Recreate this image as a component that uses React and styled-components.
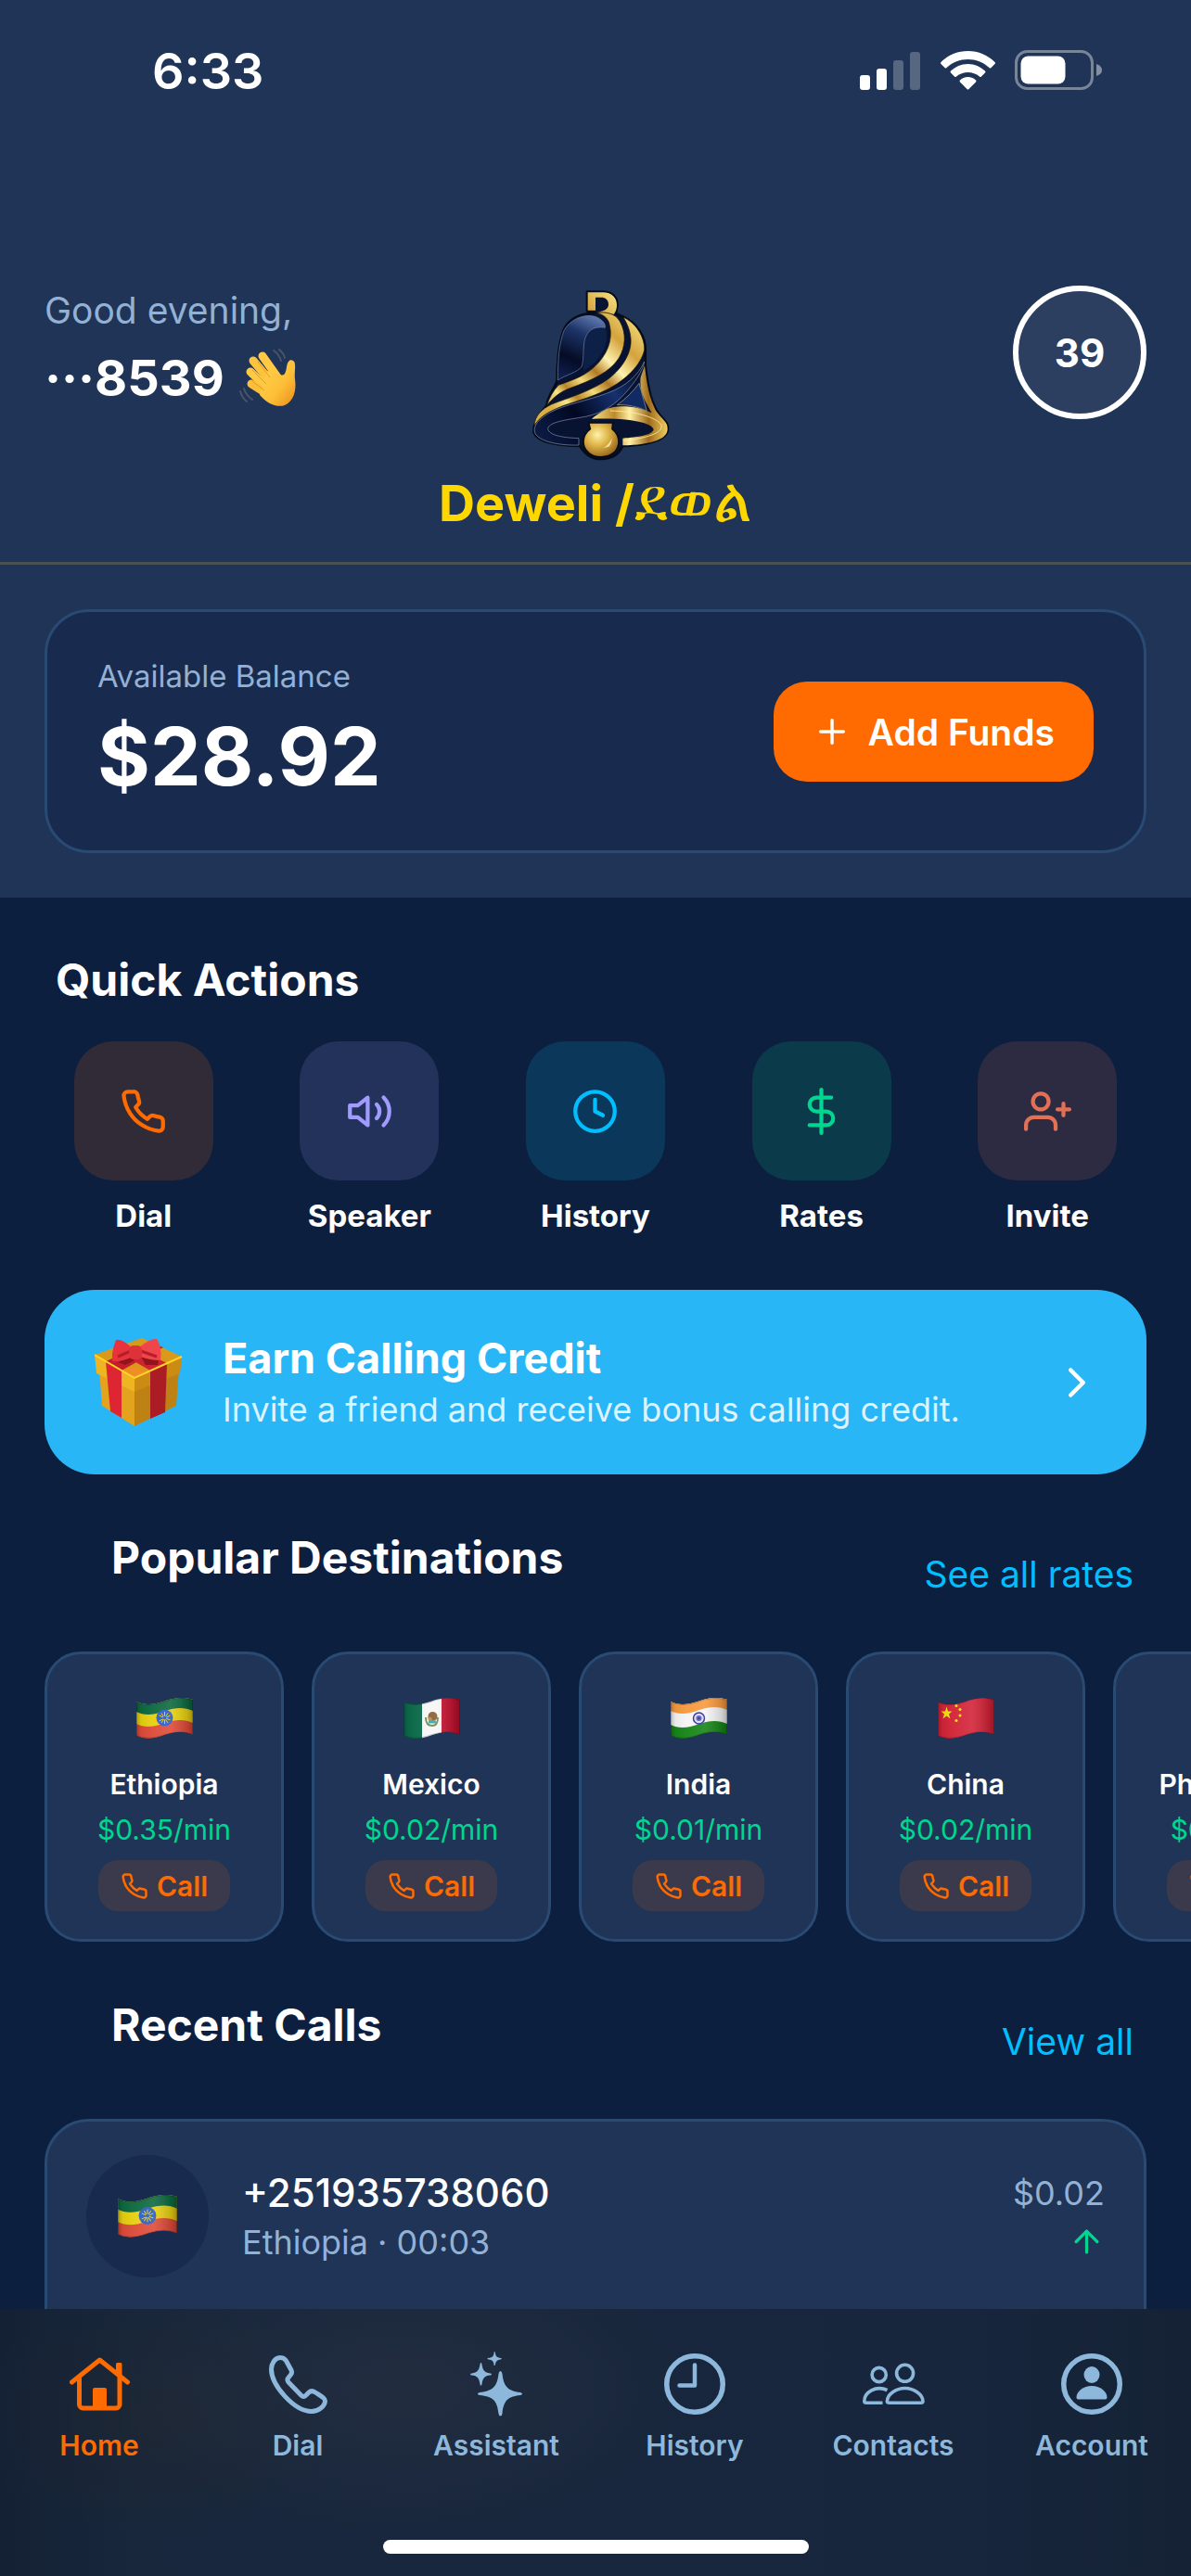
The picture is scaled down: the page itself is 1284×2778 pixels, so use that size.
import React from "react";
import styled, { createGlobalStyle } from "styled-components";
import {
  FiArrowUp,
  FiChevronRight,
  FiClock,
  FiDollarSign,
  FiPhone,
  FiPlus,
  FiUserPlus,
  FiVolume2
} from "react-icons/fi";

const colors = {
  page: "#0d1f3e",
  panel: "#1f3456",
  inset: "#182b4e",
  line: "#294a73",
  muted: "#93b1d4",
  tab: "#8db8db",
  orange: "#ff6b00",
  blue: "#00bfff",
  green: "#00d68f",
  gold: "#ffd700"
};

const GlobalStyle = createGlobalStyle`
  * {
    box-sizing: border-box;
  }

  body {
    margin: 0;
    background: ${colors.page};
    color: white;
    font-family: Inter, "Noto Sans", sans-serif;
  }

  h1, h2, p {
    margin: 0;
  }

  button {
    font-family: inherit;
    border: 0;
    padding: 0;
    color: inherit;
    cursor: pointer;
  }

  a {
    text-decoration: none;
  }

  svg {
    display: block;
    flex-shrink: 0;
  }
`;

const Screen = styled.div`
  height: 100vh;
  display: flex;
  flex-direction: column;
  overflow: hidden;
`;

const Content = styled.main`
  flex: 1;
  min-height: 0;
  overflow: hidden;
`;

const StatusBar = styled.div`
  display: flex;
  justify-content: space-between;
  align-items: center;
  padding: 44px 96px 0 164px;
  background: ${colors.panel};
`;

const Time = styled.span`
  font-size: 54px;
  line-height: 66px;
  font-weight: 600;
`;

const StatusIcons = styled.div`
  display: flex;
  align-items: center;
  gap: 21px;
  padding-bottom: 3px;
`;

const Header = styled.header`
  display: grid;
  grid-template-columns: 1fr auto 1fr;
  align-items: start;
  padding: 198px 48px 35px;
  background: ${colors.panel};
  border-bottom: 3px solid #4b5151;
`;

const Greeting = styled.div`
  padding-top: 3px;
`;

const Hello = styled.p`
  font-size: 39px;
  line-height: 48px;
  color: ${colors.muted};
`;

const UserName = styled.p`
  display: flex;
  align-items: center;
  gap: 15px;
  margin-top: 16px;
  font-size: 54px;
  line-height: 66px;
  font-weight: 700;
`;

const Brand = styled.div`
  display: flex;
  flex-direction: column;
  align-items: center;
  gap: 7px;
  padding-top: 4px;
`;

const BrandName = styled.h1`
  display: flex;
  align-items: baseline;
  height: 66px;
  font-size: 54px;
  line-height: 66px;
  font-weight: 700;
  color: ${colors.gold};
  white-space: nowrap;
`;

const Amharic = styled.span`
  font-size: 66px;
  font-weight: 400;
`;

const CounterButton = styled.button`
  justify-self: end;
  width: 144px;
  height: 144px;
  border: 6px solid white;
  border-radius: 50%;
  background: #2c3f60;
  font-size: 42px;
  font-weight: 700;
`;

const BalanceSection = styled.section`
  padding: 48px;
  background: ${colors.panel};
`;

const BalanceCard = styled.div`
  display: flex;
  align-items: center;
  justify-content: space-between;
  padding: 48px 54px 47px;
  background: ${colors.inset};
  border: 3px solid ${colors.line};
  border-radius: 48px;
`;

const BalanceLabel = styled.p`
  font-size: 33px;
  line-height: 42px;
  color: ${colors.muted};
`;

const Balance = styled.p`
  margin-top: 12px;
  font-size: 87px;
  line-height: 108px;
  font-weight: 700;
`;

const AddButton = styled.button`
  display: flex;
  align-items: center;
  gap: 18px;
  height: 108px;
  padding: 0 42px;
  border-radius: 36px;
  background: ${colors.orange};
  font-size: 39px;
  font-weight: 600;
`;

const Section = styled.section`
  padding-top: ${props => props.$top || 60}px;
`;

const Title = styled.h2`
  margin: 0 0 36px ${props => props.$left}px;
  font-size: 48px;
  line-height: 60px;
  font-weight: 700;
`;

const SectionHead = styled.div`
  display: flex;
  align-items: center;
  justify-content: space-between;
  padding-right: 62px;
  margin-bottom: 35px;
`;

const SectionLink = styled.a`
  font-size: 39px;
  line-height: 48px;
  color: ${colors.blue};
`;

const Actions = styled.div`
  display: grid;
  grid-template-columns: repeat(5, 1fr);
  padding: 0 33px;
`;

const Action = styled.button`
  display: flex;
  flex-direction: column;
  align-items: center;
  gap: 17px;
  background: none;
  font-size: 33px;
  line-height: 42px;
  font-weight: 700;
`;

const ActionTile = styled.span`
  display: flex;
  align-items: center;
  justify-content: center;
  width: 150px;
  height: 150px;
  border-radius: 42px;
  background: ${props => props.$bg};
  color: ${props => props.$color};
`;

const Promo = styled.a`
  display: flex;
  align-items: center;
  margin: 59px 48px 0;
  padding: 47px 48px 47px 54px;
  border-radius: 54px;
  background: #29b6f6;
  color: white;
`;

const PromoText = styled.div`
  flex: 1;
  margin-left: 42px;
`;

const PromoTitle = styled.p`
  font-size: 45px;
  line-height: 54px;
  font-weight: 700;
`;

const PromoNote = styled.p`
  margin-top: 6px;
  font-size: 36px;
  line-height: 45px;
  color: rgba(255, 255, 255, 0.85);
`;

const Destinations = styled.div`
  display: flex;
  gap: 30px;
  padding: 0 48px;
  overflow: hidden;
`;

const Destination = styled.div`
  display: flex;
  flex-direction: column;
  align-items: center;
  flex: 0 0 258px;
  padding: 47px 0 30px;
  background: ${colors.panel};
  border: 3px solid ${colors.line};
  border-radius: 39px;
  font-size: 30px;
  line-height: 36px;
`;

const Country = styled.p`
  margin-top: 31px;
  font-weight: 600;
`;

const Rate = styled.p`
  margin: 13px 0 15px;
  color: ${colors.green};
`;

const CallButton = styled.button`
  display: flex;
  align-items: center;
  gap: 9px;
  height: 55px;
  padding: 0 24px;
  border-radius: 21px;
  background: #3b3a4c;
  color: ${colors.orange};
  font-size: 30px;
  font-weight: 600;
`;

const Calls = styled.div`
  margin: 0 48px;
  padding-bottom: 66px;
  background: ${colors.panel};
  border: 3px solid ${colors.line};
  border-radius: 48px;
`;

const CallRow = styled.div`
  display: flex;
  align-items: center;
  padding: 36px 42px;
`;

const CallAvatar = styled.div`
  display: flex;
  align-items: center;
  justify-content: center;
  width: 132px;
  height: 132px;
  border-radius: 50%;
  background: ${colors.inset};
`;

const CallInfo = styled.div`
  flex: 1;
  margin-left: 36px;
`;

const CallNumber = styled.p`
  font-size: 42px;
  line-height: 51px;
  font-weight: 500;
`;

const CallMeta = styled.p`
  margin-top: 6px;
  font-size: 36px;
  line-height: 45px;
  color: ${colors.muted};
`;

const CallCost = styled.div`
  display: flex;
  flex-direction: column;
  align-items: flex-end;
  gap: 10px;
  font-size: 36px;
  line-height: 45px;
  color: ${colors.muted};
`;

const TabBar = styled.footer`
  padding: 48px 0 24px;
  background:
    radial-gradient(ellipse 320px 170px at 34% 30%, rgba(44, 50, 66, 0.5), transparent),
    radial-gradient(ellipse 200px 130px at 13% 40%, rgba(34, 38, 44, 0.5), transparent),
    linear-gradient(90deg, #142135, #18273c 12%, #17263d 80%, #152235);
`;

const Tabs = styled.nav`
  display: grid;
  grid-template-columns: repeat(6, 1fr);
`;

const Tab = styled.a`
  display: flex;
  flex-direction: column;
  align-items: center;
  gap: 15px;
  font-size: 30px;
  line-height: 36px;
  font-weight: 600;
  color: ${props => (props.$active ? colors.orange : colors.tab)};
`;

const TabIcon = styled.span`
  display: flex;
  align-items: center;
  height: 66px;
`;

const HomeIndicator = styled.div`
  width: 459px;
  height: 15px;
  margin: 84px auto 0;
  border-radius: 8px;
  background: white;
`;

const Signal = () => (
  <svg width="66" height="42" viewBox="0 0 66 42" fill="white">
    <rect y="26" width="11" height="16" rx="3" />
    <rect x="18" y="19" width="11" height="23" rx="3" />
    <rect x="36" y="10" width="11" height="32" rx="3" opacity=".25" />
    <rect x="54" y="1" width="11" height="41" rx="3" opacity=".25" />
  </svg>
);

const Wifi = () => (
  <svg width="59" height="42" viewBox="0 0 59 42" fill="white">
    <path d="M29.500 0C41 0 51 4.500 58.500 12Q59.500 13 58.500 14L54.500 18Q53.500 19 52.500 18C46 12 38 9 29.500 9S13 12 6.500 18Q5.500 19 4.500 18L.5 14Q-.5 13 .5 12C8 4.500 18 0 29.500 0Z" />
    <path d="M29.500 14C37 14 43 17 48 21.500Q49 22.500 48 23.500L44 27.500Q43 28.500 42 27.500C38.500 24.500 34 23 29.500 23S20.500 24.500 17 27.500Q16 28.500 15 27.500L11 23.500Q10 22.500 11 21.500C16 17 22 14 29.500 14Z" />
    <path d="M29.500 28C33 28 36 29.500 38 31.500Q39 32.500 38 33.500L30.500 41Q29.500 42 28.500 41L21 33.500Q20 32.500 21 31.500C23 29.500 26 28 29.500 28Z" />
  </svg>
);

const Battery = () => (
  <svg width="94" height="43" viewBox="0 0 94 43">
    <rect x="1.500" y="1.500" width="82" height="40" rx="12" fill="none" stroke="white" strokeWidth="3" opacity=".4" />
    <rect x="6.500" y="6.500" width="48" height="30" rx="8" fill="white" />
    <path d="M88 15Q94 17 94 21.500T88 28Z" fill="white" opacity=".45" />
  </svg>
);

const Hand = () => (
  <svg width="66" height="64" viewBox="0 0 66 64" role="img" aria-label="Waving hand">
    <defs>
      <linearGradient id="skin" x1="0" y1="0" x2="1" y2="1">
        <stop offset="0" stopColor="#ffd453" />
        <stop offset=".6" stopColor="#fdbe36" />
        <stop offset="1" stopColor="#e78b1d" />
      </linearGradient>
    </defs>
    <g stroke="#ffc943" strokeWidth="9" strokeLinecap="round">
      <path d="M26 8L43 32" />
      <path d="M16 13L37 38" stroke="#fdc23e" />
      <path d="M13 25L33 44" />
      <path d="M14 38L33 50" stroke="#fdbf3a" />
    </g>
    <path d="M31 24L45 28C50 30 51 26 52 20C53 13 56 11 59 13C63 15 60 25 61 33C63 46 59 57 50 61C41 64 31 59 23 50Z" fill="url(#skin)" />
    <path d="M21 14L34 31M15 23L30 38M15 35L28 45" stroke="#d98b22" strokeWidth="1" fill="none" opacity=".7" />
    <path d="M38 2Q44 6 46 13M44 1Q49 5 50 10M6 43Q8 50 15 55M2 46Q4 53 9 57" stroke="#4a5468" strokeWidth="2" fill="none" strokeLinecap="round" />
  </svg>
);

const Bell = () => (
  <svg width="162" height="186" viewBox="59 66 486 558" role="img" aria-label="Deweli bell">
    <defs>
      <linearGradient id="ribbon" gradientUnits="userSpaceOnUse" x1="150" y1="440" x2="440" y2="150">
        <stop offset="0" stopColor="#d8ae45" />
        <stop offset=".12" stopColor="#f6e48e" />
        <stop offset=".2" stopColor="#b98527" />
        <stop offset=".32" stopColor="#f3dc7c" />
        <stop offset=".45" stopColor="#b07a24" />
        <stop offset=".58" stopColor="#fff3b0" />
        <stop offset=".75" stopColor="#d3a33d" />
        <stop offset="1" stopColor="#f6e184" />
      </linearGradient>
      <linearGradient id="rim" x1="0" y1="0" x2="1" y2="0">
        <stop offset="0" stopColor="#f7e48c" />
        <stop offset=".3" stopColor="#bd8a2b" />
        <stop offset=".5" stopColor="#fff0a5" />
        <stop offset=".75" stopColor="#9f6a19" />
        <stop offset="1" stopColor="#f0cf62" />
      </linearGradient>
      <linearGradient id="dome" gradientUnits="userSpaceOnUse" x1="290" y1="150" x2="200" y2="350">
        <stop offset="0" stopColor="#5f79ae" />
        <stop offset=".3" stopColor="#1d3468" />
        <stop offset=".7" stopColor="#040c25" />
        <stop offset="1" stopColor="#0d1f4d" />
      </linearGradient>
      <linearGradient id="band" gradientUnits="userSpaceOnUse" x1="120" y1="540" x2="450" y2="320">
        <stop offset="0" stopColor="#0c1b44" />
        <stop offset=".35" stopColor="#020822" />
        <stop offset=".7" stopColor="#16316f" />
        <stop offset="1" stopColor="#030a20" />
      </linearGradient>
      <radialGradient id="clapper" cx=".4" cy=".35" r=".7">
        <stop offset="0" stopColor="#fff2ab" />
        <stop offset=".45" stopColor="#dfb548" />
        <stop offset="1" stopColor="#93611a" />
      </radialGradient>
    </defs>
    <path
      d="M275 74H328C360 76 374 95 372 120L368 144L392 155C436 175 464 220 463 262V312C470 370 478 420 494 446C505 474 525 485 534 504C545 540 510 568 390 573C375 605 350 615 320 615C290 615 268 600 252 573C180 573 115 560 103 530C98 500 125 465 144 442C150 405 174 380 178 360C178 290 184 240 198 200C215 160 250 145 300 142L275 136Z"
      fill="#071330" stroke="#040b1a" strokeWidth="8" strokeLinejoin="round"
    />
    <path d="M333 190C348 225 335 290 262 330C268 290 258 240 275 210C290 190 310 185 333 190Z" fill="#0d2048" />
    <path d="M180 360C180 290 185 240 200 200C225 152 290 138 320 165C330 172 334 180 333 190C300 185 272 195 265 240C262 270 264 292 258 315C245 335 205 343 180 360Z" fill="url(#dome)" stroke="#6f84ab" strokeWidth="2" />
    <path d="M277 76H326C355 76 371 93 371 118C371 130 367 140 361 147L335 140H308C331 137 344 130 344 115C344 100 334 92 320 92H302V134H277Z" fill="url(#ribbon)" />
    <path d="M305 143C335 138 365 143 381 170C402 208 400 250 378 288C348 335 290 360 222 385C185 398 165 418 145 441C152 418 165 395 182 376C232 358 275 345 312 303C350 260 358 215 345 172C338 156 325 146 305 143Z" fill="url(#ribbon)" stroke="#1a1205" strokeWidth="2" />
    <path d="M392 157C430 172 462 220 460 262C450 310 400 360 340 390C280 420 220 432 180 450C145 465 120 480 104 508C105 475 130 452 160 438C220 415 290 395 345 355C390 320 420 270 416 225C414 200 405 178 392 157Z" fill="url(#ribbon)" stroke="#1a1205" strokeWidth="2" />
    <path d="M460 300C440 345 400 380 340 402C280 425 200 440 160 462C125 480 98 505 106 530C118 560 190 572 248 570V548C195 546 152 538 148 518C148 495 210 488 270 478C330 465 370 435 400 400C430 365 455 330 460 300Z" fill="url(#band)" stroke="#8593b3" strokeWidth="2" />
    <path d="M443 370L468 460C440 445 400 438 372 440C400 420 425 395 443 370Z" fill="#122a63" stroke="#a8a994" strokeWidth="2" />
    <path d="M461 313C466 350 470 400 492 448C500 470 522 484 532 502C548 545 500 568 390 571V548C440 545 485 537 490 520C488 500 420 480 290 485C330 455 345 444 400 445C440 447 465 458 484 466C465 430 442 400 448 350Z" fill="url(#rim)" />
    <path d="M350 459C430 460 500 480 515 505C520 525 490 545 392 556" fill="none" stroke="#fff0aa" strokeWidth="3" opacity=".8" />
    <path d="M280 498H358L356 518C384 540 382 575 362 594C340 613 300 613 279 594C257 575 256 540 285 518Z" fill="url(#clapper)" stroke="#080b12" strokeWidth="5" />
    <path d="M345 575Q354 567 355 548Q345 570 325 580Z" fill="#fff0aa" opacity=".8" />
  </svg>
);

const Gift = () => (
  <svg width="96" height="96" viewBox="0 0 96 96">
    <path d="M5 34L8 73L43 95V55Z" fill="#e3a31c" />
    <path d="M91 34L88 73L43 95V55Z" fill="#bd8213" />
    <path d="M0 18L51 0L94 20L43 43Z" fill="#d99a1c" />
    <path d="M0 18L43 43V58L2 38Z" fill="#efb422" />
    <path d="M94 20L43 43V58L92 38Z" fill="#cc8c14" />
    <path d="M12 25L29 35V86L17 79Z" fill="#dd2631" />
    <path d="M60 35L78 27L76 80L60 87Z" fill="#ab1c25" />
    <path d="M12 25L60 5L74 10L29 35Z" fill="#c41f29" />
    <path d="M78 27L60 35L25 15L40 9Z" fill="#ce2430" />
    <path d="M43 31L57 36L43 43L30 36Z" fill="#ef8e24" />
    <path d="M0 18L43 43L94 20" fill="none" stroke="#ffd529" strokeWidth="2" />
    <path d="M38 20L25 26L33 29L43 24ZM50 20L55 29L68 29L70 18Z" fill="#8f151c" />
    <path d="M41 11Q29 0 23 2Q18 14 19 25Q30 26 41 20Z" fill="#e8333d" />
    <path d="M48 10Q60 0 67 1Q73 9 71 24Q60 24 49 20Z" fill="#f0454b" />
    <path d="M39 14L25 20M50 14L67 20" stroke="#b51f28" strokeWidth="3" />
    <rect x="37" y="8" width="14" height="15" rx="5" fill="#de323a" />
  </svg>
);

const wave = "M0 4C8 8 17 8 29 4C42 -1 53 -1 61 2V40C52 36 43 36 31 40C18 45 8 45 0 41Z";

const flagArt = {
  Ethiopia: (
    <>
      <path d={wave} fill="#de4b39" />
      <path d={wave} fill="#e7d011" transform="translate(0 -13)" />
      <path d={wave} fill="#0d6a40" transform="translate(0 -26)" />
      <circle cx="30.500" cy="21.500" r="9" fill="#2c5cc5" />
      <path d="M30.500 15V28M24.500 19L36.500 24M24.500 25L36.500 19M27 16.500L34 27M34 16.500L27 27" stroke="#e7d011" strokeWidth="1" />
      <circle cx="30.500" cy="21.500" r="2" fill="#2c5cc5" />
    </>
  ),
  Mexico: (
    <>
      <rect width="21" height="44" fill="#0c6b4b" />
      <rect x="20" width="21" height="44" fill="#f6f6f6" />
      <rect x="41" width="20" height="44" fill="#c3122f" />
      <path d="M24 21Q24 30 31 30Q37 30 37 21" fill="none" stroke="#6f8b46" strokeWidth="2" />
      <circle cx="31.500" cy="20" r="5" fill="#8a5d36" />
      <path d="M26 21Q31 19 31 25L28 27Z" fill="#b48a50" />
      <path d="M27 26H35" stroke="#35a7bb" strokeWidth="3" />
    </>
  ),
  India: (
    <>
      <path d={wave} fill="#178517" />
      <path d={wave} fill="#f5f5f5" transform="translate(0 -12)" />
      <path d={wave} fill="#f79a3e" transform="translate(0 -27)" />
      <circle cx="30.500" cy="22" r="6" fill="#dcdcf0" stroke="#2a2aa5" strokeWidth="1.500" />
      <circle cx="30.500" cy="22" r="3" fill="#5a5ab8" />
      <circle cx="30.500" cy="22" r="1" fill="#20208a" />
    </>
  ),
  China: (
    <>
      <path d={wave} fill="#d32438" />
      <path d="M9.500 9.500L11 14.500H15.500L12 17.500L13.500 22.500L9.500 19.500L5.500 22.500L7 17.500L3.500 14.500H8Z" fill="#f2df14" />
      <g fill="#f2df14">
        <circle cx="20" cy="8.500" r="1.500" />
        <circle cx="24" cy="12.500" r="1.500" />
        <circle cx="24" cy="19" r="1.500" />
        <circle cx="20" cy="24.500" r="1.500" />
      </g>
    </>
  ),
  Philippines: (
    <>
      <path d={wave} fill="#ce1126" />
      <path d={wave} fill="#1744a5" transform="translate(0 -20)" />
      <path d="M0 4L28 22L0 41Z" fill="white" />
    </>
  )
};

const Flag = ({ country, size = 61 }) => {
  const id = React.useId();
  return (
    <svg width={size} height={size === 61 ? 44 : 46} viewBox="0 0 61 44" role="img" aria-label={`${country} flag`}>
      <defs>
        <clipPath id={`${id}c`}>
          <path d={wave} />
        </clipPath>
        <linearGradient id={`${id}s`}>
          <stop offset="0" stopColor="#000" stopOpacity=".25" />
          <stop offset=".08" stopColor="#000" stopOpacity=".05" />
          <stop offset=".3" stopColor="#fff" stopOpacity=".04" />
          <stop offset=".6" stopColor="#fff" stopOpacity=".1" />
          <stop offset=".9" stopColor="#000" stopOpacity=".15" />
          <stop offset="1" stopColor="#000" stopOpacity=".3" />
        </linearGradient>
      </defs>
      <g clipPath={`url(#${id}c)`}>
        {flagArt[country]}
        <path d={wave} fill={`url(#${id}s)`} />
        <path d={wave} fill="none" stroke="#000" strokeWidth="2" opacity=".2" />
      </g>
    </svg>
  );
};

const tabIcons = {
  Home: (
    <svg width="65" height="58" viewBox="0 0 65 58" fill="none" stroke="currentColor" strokeWidth="5" strokeLinecap="round" strokeLinejoin="round">
      <path d="M2.500 27L32.500 3L62.500 27" />
      <path d="M10.500 22V51a4 4 0 0 0 4 4H50a4 4 0 0 0 4-4V22" />
      <path d="M50 7.500a1.500 1.500 0 0 1 1.500-1.500H55a1.500 1.500 0 0 1 1.500 1.500V22L50 17ZM25 55V35a2 2 0 0 1 2-2H38a2 2 0 0 1 2 2V55Z" fill="currentColor" stroke="none" />
    </svg>
  ),
  Dial: (
    <svg width="63" height="63" viewBox="0 0 63 63" fill="none" stroke="currentColor" strokeWidth="5" strokeLinejoin="round">
      <path d="M12 2.500C6.500 2.500 2.500 9 2.500 15C2.500 32 27 60.500 46 60.500C53 60.500 60.500 55 60.500 49C60.500 46.500 56 44 50 40C47 38 45 38 43 40L40 43C38 45 36.500 45 34.500 43L21 29C19.500 27 19.500 25.500 21 24L23 21.500C25 19.500 25 18 24 16L18.500 6C17 3.500 15 2.500 12 2.500Z" />
    </svg>
  ),
  Assistant: (
    <svg width="56" height="70" viewBox="0 0 56 70" fill="currentColor">
      <path d="M32.500 21Q34 21 34.500 24C36 37 40 42.500 54 44Q56 44.500 56 45.500T54 47C40 48.500 36 53 34.500 67Q34 69.500 32.500 69.500T30.500 67C29 53 25 48.500 10 47Q8 46.500 8 45.500T10 44C25 42.500 29 37 30.500 24Q31 21 32.500 21Z" />
      <path d="M11.500 12Q12.500 12 12.500 14C13.500 20 15.500 22.500 21.500 23.500Q23 23.500 23 24.500T21.500 25.500C15.500 26 13.500 28.500 12.500 35Q12.500 36.500 11.500 36.500T10.500 35C9.500 28.500 7.500 26 1.500 25.500Q0 25.500 0 24.500T1.500 23.500C7.500 22.500 9.500 20 10.500 14Q10.500 12 11.500 12Z" />
      <path d="M26 0Q27 0 27 2C27.500 5 29 6.500 32.500 7Q34 7 34 7.500T32.500 8.500C29 9 27.500 10.500 27 13.500Q27 15 26 15T25.500 13.500C25 10.500 23.500 9 20 8.500Q18.500 8.500 18.500 7.500T20 7C23.500 6.500 25 5 25.500 2Q25.500 0 26 0Z" />
    </svg>
  ),
  History: (
    <svg width="66" height="66" viewBox="0 0 66 66" fill="none" stroke="currentColor" strokeLinecap="round" strokeLinejoin="round">
      <circle cx="33" cy="33" r="30.250" strokeWidth="5.500" />
      <path d="M33 12.500V34.500H16.500" strokeWidth="4.500" />
    </svg>
  ),
  Contacts: (
    <svg width="67" height="46" viewBox="0 0 67 46" fill="none" stroke="currentColor" strokeWidth="3.600" strokeLinejoin="round">
      <circle cx="17.700" cy="13" r="7.600" />
      <circle cx="45.600" cy="11.300" r="9" />
      <path d="M45.600 27.500C55 27.500 65 34 65 41.500Q65 43.300 62.500 43.300H29Q26.400 43.300 26.400 41.500C26.400 34 36 27.500 45.600 27.500Z" />
      <path d="M26.500 29.500C14 24 1.800 32 1.800 41.500Q1.800 43.300 4 43.300H21.500" />
    </svg>
  ),
  Account: (
    <svg width="66" height="66" viewBox="0 0 66 66" fill="currentColor">
      <circle cx="33" cy="33" r="30.250" fill="none" stroke="currentColor" strokeWidth="5.500" />
      <ellipse cx="33" cy="23" rx="8.500" ry="9" />
      <path d="M33 35C42 35 49.500 41 49.500 47.500Q49.500 49.500 47.500 49.500H18.500Q16.500 49.500 16.500 47.500C16.500 41 24 35 33 35Z" />
    </svg>
  )
};

const actions = [
  { label: "Dial", Icon: FiPhone, color: colors.orange, bg: "#312b38" },
  { label: "Speaker", Icon: FiVolume2, color: "#a29bfe", bg: "#23325b" },
  { label: "History", Icon: FiClock, color: colors.blue, bg: "#0b375b" },
  { label: "Rates", Icon: FiDollarSign, color: colors.green, bg: "#0b3a4a" },
  { label: "Invite", Icon: FiUserPlus, color: "#e17055", bg: "#2d2b42" }
];

const destinations = [
  { country: "Ethiopia", rate: "$0.35/min" },
  { country: "Mexico", rate: "$0.02/min" },
  { country: "India", rate: "$0.01/min" },
  { country: "China", rate: "$0.02/min" },
  { country: "Philippines", rate: "$0.17/min" }
];

const tabs = ["Home", "Dial", "Assistant", "History", "Contacts", "Account"];

const App = () => (
  <Screen>
    <GlobalStyle />
    <Content>
      <StatusBar>
        <Time>6:33</Time>
        <StatusIcons>
          <Signal />
          <Wifi />
          <Battery />
        </StatusIcons>
      </StatusBar>
      <Header>
        <Greeting>
          <Hello>Good evening,</Hello>
          <UserName>
            ···8539 <Hand />
          </UserName>
        </Greeting>
        <Brand>
          <Bell />
          <BrandName>
            Deweli /<Amharic lang="am">ደወል</Amharic>
          </BrandName>
        </Brand>
        <CounterButton type="button">39</CounterButton>
      </Header>

      <BalanceSection>
        <BalanceCard>
          <div>
            <BalanceLabel>Available Balance</BalanceLabel>
            <Balance>$28.92</Balance>
          </div>
          <AddButton type="button">
            <FiPlus size={42} /> Add Funds
          </AddButton>
        </BalanceCard>
      </BalanceSection>

      <Section $top={59}>
        <Title $left={60}>Quick Actions</Title>
        <Actions>
          {actions.map(({ label, Icon, color, bg }) => (
            <Action type="button" key={label}>
              <ActionTile $bg={bg} $color={color}>
                <Icon size={51} />
              </ActionTile>
              {label}
            </Action>
          ))}
        </Actions>
      </Section>

      <Promo href="#invite">
        <Gift />
        <PromoText>
          <PromoTitle>Earn Calling Credit</PromoTitle>
          <PromoNote>Invite a friend and receive bonus calling credit.</PromoNote>
        </PromoText>
        <FiChevronRight size={54} />
      </Promo>

      <Section>
        <SectionHead>
          <Title $left={120}>Popular Destinations</Title>
          <SectionLink href="#rates">See all rates</SectionLink>
        </SectionHead>
        <Destinations>
          {destinations.map(({ country, rate }) => (
            <Destination key={country}>
              <Flag country={country} />
              <Country>{country}</Country>
              <Rate>{rate}</Rate>
              <CallButton type="button">
                <FiPhone size={30} /> Call
              </CallButton>
            </Destination>
          ))}
        </Destinations>
      </Section>

      <Section>
        <SectionHead>
          <Title $left={120}>Recent Calls</Title>
          <SectionLink href="#calls">View all</SectionLink>
        </SectionHead>
        <Calls>
          <CallRow>
            <CallAvatar>
              <Flag country="Ethiopia" size={64} />
            </CallAvatar>
            <CallInfo>
              <CallNumber>+251935738060</CallNumber>
              <CallMeta>Ethiopia · 00:03</CallMeta>
            </CallInfo>
            <CallCost>
              $0.02
              <FiArrowUp size={39} color={colors.green} />
            </CallCost>
          </CallRow>
        </Calls>
      </Section>
    </Content>

    <TabBar>
      <Tabs>
        {tabs.map(name => (
          <Tab href={`#${name.toLowerCase()}`} key={name} $active={name === "Home"}>
            <TabIcon>{tabIcons[name]}</TabIcon>
            {name}
          </Tab>
        ))}
      </Tabs>
      <HomeIndicator />
    </TabBar>
  </Screen>
);

export default App;
